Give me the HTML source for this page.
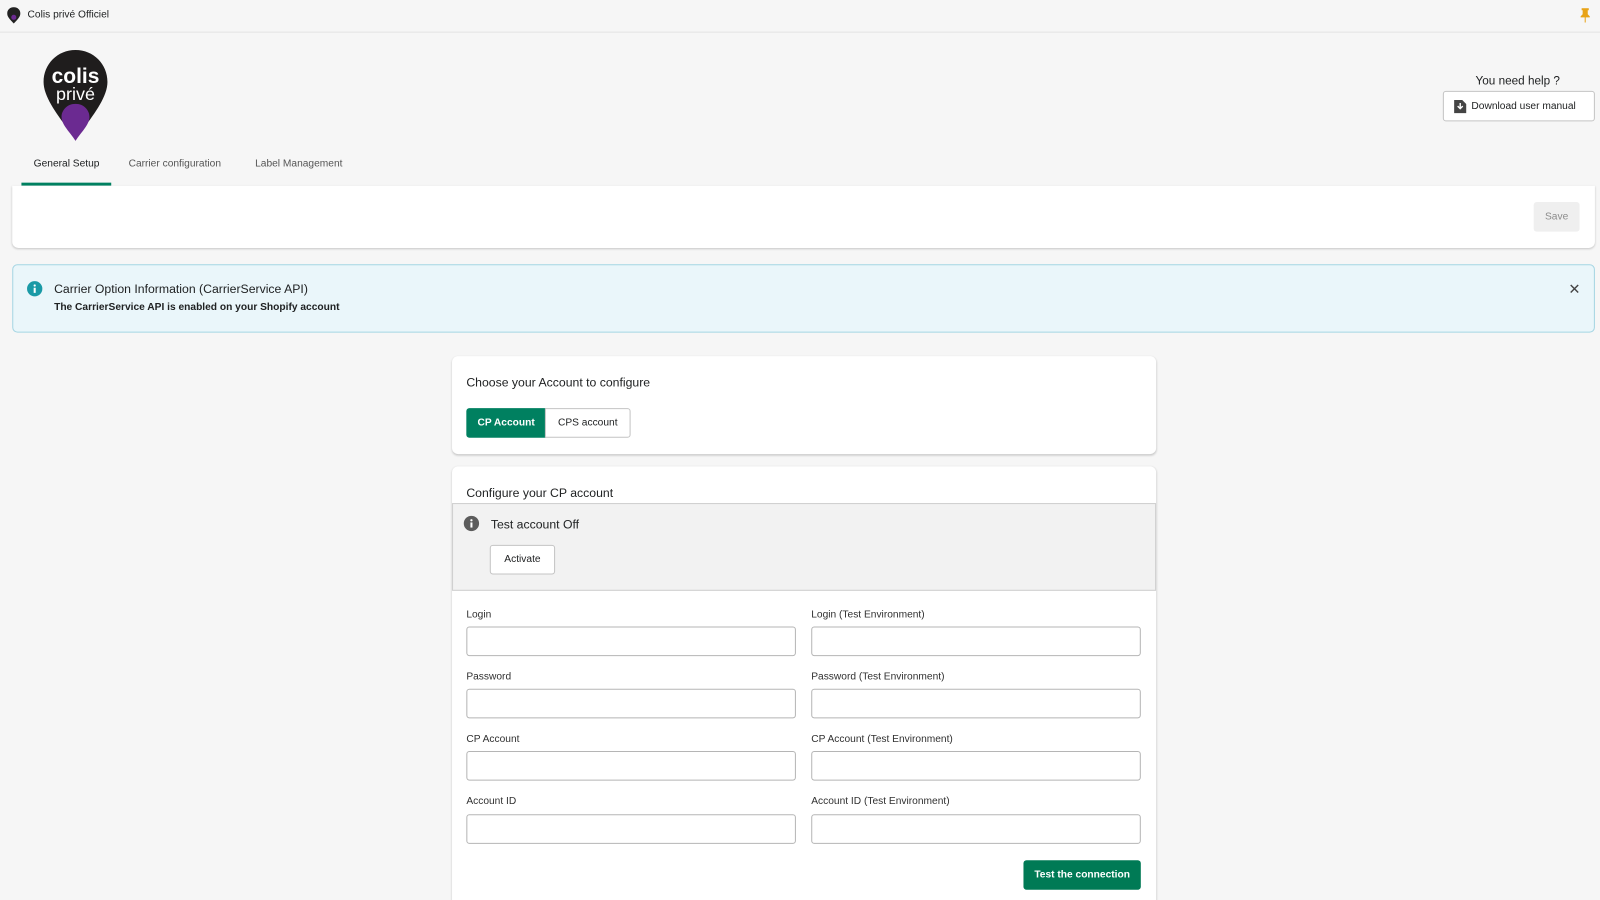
<!DOCTYPE html>
<html><head><meta charset="utf-8"><style>
*{box-sizing:border-box;margin:0;padding:0}
html,body{width:1600px;height:900px;overflow:hidden;background:#f6f6f6}
#w{width:1568px;height:882px;transform:scale(1.020408);transform-origin:0 0;position:relative;font-family:"Liberation Sans",sans-serif;color:#202223;font-size:11px}
.a{position:absolute}
.topbar{left:0;top:0;width:1568px;height:32px;border-bottom:1px solid #e3e3e3;background:#f6f6f6}
.card{background:#fff;border-radius:6px;box-shadow:0 1px 2px rgba(0,0,0,.2)}
.inp{position:absolute;height:29px;border:1px solid #b5b5b5;border-radius:3px;background:#fff;width:323px}
.lbl{position:absolute;font-size:10px;color:#303030}
.btn{position:absolute;border:1px solid #c4c4c4;border-radius:3px;background:#fff;font-size:10px;display:flex;align-items:center;justify-content:center}
</style></head><body><div id="w">
<div class="a topbar"></div>
<svg class="a" style="left:7px;top:7px" width="13" height="16" viewBox="0 0 13 16"><path d="M6.5 0C2.9 0 0 2.7 0 6.2c0 3.2 3.4 6.6 6.5 9.8C9.6 12.8 13 9.4 13 6.2 13 2.7 10.1 0 6.5 0z" fill="#222"/><circle cx="6.5" cy="10" r="2.5" fill="#6b2a91"/></svg>
<div class="a" style="left:27px;top:9px;font-size:10px">Colis privé Officiel</div>
<svg class="a" style="left:1548px;top:8px" width="11" height="14" viewBox="0 0 11 14"><path d="M2 0h7v2H8v4l2 2v1H6v5H5V9H1V8l2-2V2H2z" fill="#e8a317"/></svg>
<svg class="a" style="left:42px;top:49px" width="64" height="90" viewBox="0 0 64 92"><path d="M32 0C14 0 0 14 0 32c0 18 20 40 32 58C44 72 64 50 64 32 64 14 50 0 32 0z" fill="#1f1d1d"/><path d="M32 54c-9 0-14 7-14 13 0 8 9 16 14 24 5-8 14-16 14-24 0-6-5-13-14-13z" fill="#6b2a91"/><text x="32" y="33" text-anchor="middle" fill="#fff" font-family="Liberation Sans" font-weight="bold" font-size="21">colis</text><text x="32" y="50" text-anchor="middle" fill="#fff" font-family="Liberation Sans" font-size="18">privé</text></svg>
<div class="a" style="left:1446px;top:74px;font-size:11.5px">You need help ?</div>
<div class="btn" style="left:1414px;top:89px;width:149px;height:30px;justify-content:flex-start;padding-left:10px"><svg width="12" height="14" viewBox="0 0 12 14" style="margin-right:5px"><path d="M0 1h8l4 4v9H0z" fill="#444"/><path d="M6 4v5M3.5 7L6 9.5 8.5 7" stroke="#fff" stroke-width="1.4" fill="none"/></svg>Download user manual</div>
<div class="a" style="left:33px;top:155px;font-size:10px">General Setup</div>
<div class="a" style="left:126px;top:155px;font-size:10px;color:#555">Carrier configuration</div>
<div class="a" style="left:250px;top:155px;font-size:10px;color:#555">Label Management</div>
<div class="a" style="left:21px;top:179px;width:88px;height:3px;background:#008060"></div>
<div class="a card" style="left:12px;top:182px;width:1551px;height:61px;border-radius:0 0 6px 6px"></div>
<div class="a" style="left:1503px;top:198px;width:45px;height:29px;background:#efefef;border-radius:3px;color:#8c8c8c;font-size:10px;display:flex;align-items:center;justify-content:center">Save</div>
<div class="a" style="left:12px;top:259px;width:1551px;height:67px;background:#eaf6fa;border:1px solid #a4d5e3;border-radius:5px"></div>
<svg class="a" style="left:26px;top:275px" width="16" height="16" viewBox="0 0 16 16"><circle cx="8" cy="8" r="7.5" fill="#1a9aa6"/><rect x="7" y="7" width="2" height="5" fill="#fff"/><circle cx="8" cy="4.8" r="1.1" fill="#fff"/></svg>
<div class="a" style="left:53px;top:276px;font-size:12px">Carrier Option Information (CarrierService API)</div>
<div class="a" style="left:53px;top:296px;font-size:10px;font-weight:bold">The CarrierService API is enabled on your Shopify account</div>
<div class="a" style="left:1537px;top:275px;font-size:14px;color:#444">✕</div>
<div class="a card" style="left:443px;top:349px;width:690px;height:96px"></div>
<div class="a" style="left:457px;top:368px;font-size:12px">Choose your Account to configure</div>
<div class="a" style="left:457px;top:400px;width:78px;height:29px;background:#008060;border-radius:3px 0 0 3px;color:#fff;font-size:10px;font-weight:bold;display:flex;align-items:center;justify-content:center">CP Account</div>
<div class="btn" style="left:534px;top:400px;width:84px;height:29px;border-radius:0 3px 3px 0">CPS account</div>
<div class="a card" style="left:443px;top:457px;width:690px;height:460px"></div>
<div class="a" style="left:457px;top:476px;font-size:12px">Configure your CP account</div>
<div class="a" style="left:443px;top:493px;width:690px;height:86px;background:#f2f2f2;border:1px solid #cfcfcf"></div>
<svg class="a" style="left:454px;top:505px" width="16" height="16" viewBox="0 0 16 16"><circle cx="8" cy="8" r="7.5" fill="#5c5c5c"/><rect x="7" y="7" width="2" height="5" fill="#fff"/><circle cx="8" cy="4.8" r="1.1" fill="#fff"/></svg>
<div class="a" style="left:481px;top:507px;font-size:12px">Test account Off</div>
<div class="btn" style="left:480px;top:534px;width:64px;height:29px">Activate</div>
<div class="lbl" style="left:457px;top:597px">Login</div><div class="lbl" style="left:795px;top:597px">Login (Test Environment)</div>
<div class="inp" style="left:457px;top:614px"></div><div class="inp" style="left:795px;top:614px"></div>
<div class="lbl" style="left:457px;top:658px">Password</div><div class="lbl" style="left:795px;top:658px">Password (Test Environment)</div>
<div class="inp" style="left:457px;top:675px"></div><div class="inp" style="left:795px;top:675px"></div>
<div class="lbl" style="left:457px;top:719px">CP Account</div><div class="lbl" style="left:795px;top:719px">CP Account (Test Environment)</div>
<div class="inp" style="left:457px;top:736px"></div><div class="inp" style="left:795px;top:736px"></div>
<div class="lbl" style="left:457px;top:780px">Account ID</div><div class="lbl" style="left:795px;top:780px">Account ID (Test Environment)</div>
<div class="inp" style="left:457px;top:798px"></div><div class="inp" style="left:795px;top:798px"></div>
<div class="a" style="left:1003px;top:843px;width:115px;height:29px;background:#007a55;border-radius:3px;color:#fff;font-size:10px;font-weight:bold;display:flex;align-items:center;justify-content:center">Test the connection</div>
</div></body></html>
